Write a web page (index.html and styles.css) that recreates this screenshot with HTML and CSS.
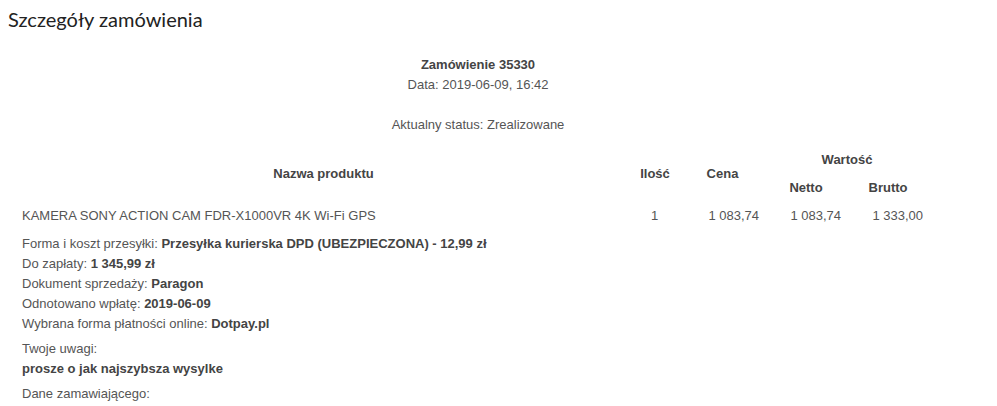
FILE: index.html
```html
<!DOCTYPE html>
<html lang="pl">
<head>
    <meta charset="UTF-8">
    <title>Szczegóły zamówienia</title>
    <link rel="stylesheet" href="styles.css">
</head>
<body>
    <h1 class="page-title">Szczegóły zamówienia</h1>

    <div class="order">
        <div class="order-head">
            <p class="order-no">Zamówienie 35330</p>
            <p>Data: 2019-06-09, 16:42</p>
            <p class="order-status">Aktualny status: Zrealizowane</p>
        </div>

        <table class="products">
            <colgroup>
                <col class="c-name">
                <col class="c-qty">
                <col class="c-price">
                <col class="c-net">
                <col class="c-gross">
            </colgroup>
            <thead>
                <tr>
                    <th rowspan="2">Nazwa produktu</th>
                    <th rowspan="2">Ilość</th>
                    <th rowspan="2">Cena</th>
                    <th colspan="2">Wartość</th>
                </tr>
                <tr>
                    <th>Netto</th>
                    <th>Brutto</th>
                </tr>
            </thead>
            <tbody>
                <tr>
                    <td class="name">KAMERA SONY ACTION CAM FDR-X1000VR 4K Wi-Fi GPS</td>
                    <td class="qty">1</td>
                    <td class="num">1 083,74</td>
                    <td class="num">1 083,74</td>
                    <td class="num">1 333,00</td>
                </tr>
            </tbody>
        </table>

        <div class="info">
            <p>Forma i koszt przesyłki: <b>Przesyłka kurierska DPD (UBEZPIECZONA) - 12,99 zł</b></p>
            <p>Do zapłaty: <b>1 345,99 zł</b></p>
            <p>Dokument sprzedaży: <b>Paragon</b></p>
            <p>Odnotowano wpłatę: <b>2019-06-09</b></p>
            <p>Wybrana forma płatności online: <b>Dotpay.pl</b></p>
        </div>

        <div class="info">
            <p>Twoje uwagi:</p>
            <p><b>prosze o jak najszybsza wysylke</b></p>
        </div>

        <div class="info">
            <p>Dane zamawiającego:</p>
        </div>
    </div>
</body>
</html>
```

FILE: styles.css
```css
body {
    margin: 0;
    padding: 0 8px;
    background-color: #fff;
    font-family: "Liberation Sans", Arial, sans-serif;
    font-size: 13px;
    color: #555;
}
.page-title {
    font-family: Lato, "Open Sans", sans-serif;
    font-weight: normal;
    font-size: 20px;
    color: #222;
    margin: 0;
    padding-top: 6px;
    line-height: 26px;
}
.order {
    width: 922px;
    margin-left: 9px;
}
.order-head {
    text-align: center;
    padding-top: 23px;
}
.order-head p {
    margin: 0;
    line-height: 20px;
}
.order-no {
    font-weight: bold;
    color: #444;
}
.order-status {
    margin-top: 20px !important;
}
.products {
    border-collapse: collapse;
    table-layout: fixed;
    width: 912px;
    margin-top: 10px;
}
.c-name { width: 613px; }
.c-qty { width: 50px; }
.c-price { width: 85px; }
.c-net { width: 82px; }
.c-gross { width: 82px; }
.products th {
    font-weight: bold;
    color: #444;
    height: 28px;
    padding: 0;
    text-align: center;
}
.products td {
    height: 28px;
    padding: 0 6px 0 5px;
}
.products td.qty {
    text-align: center;
}
.products td.num {
    text-align: right;
}
.info {
    padding-left: 5px;
    margin-top: 5px;
}
.info p {
    margin: 0;
    line-height: 20px;
}
.info b {
    color: #444;
}
```
